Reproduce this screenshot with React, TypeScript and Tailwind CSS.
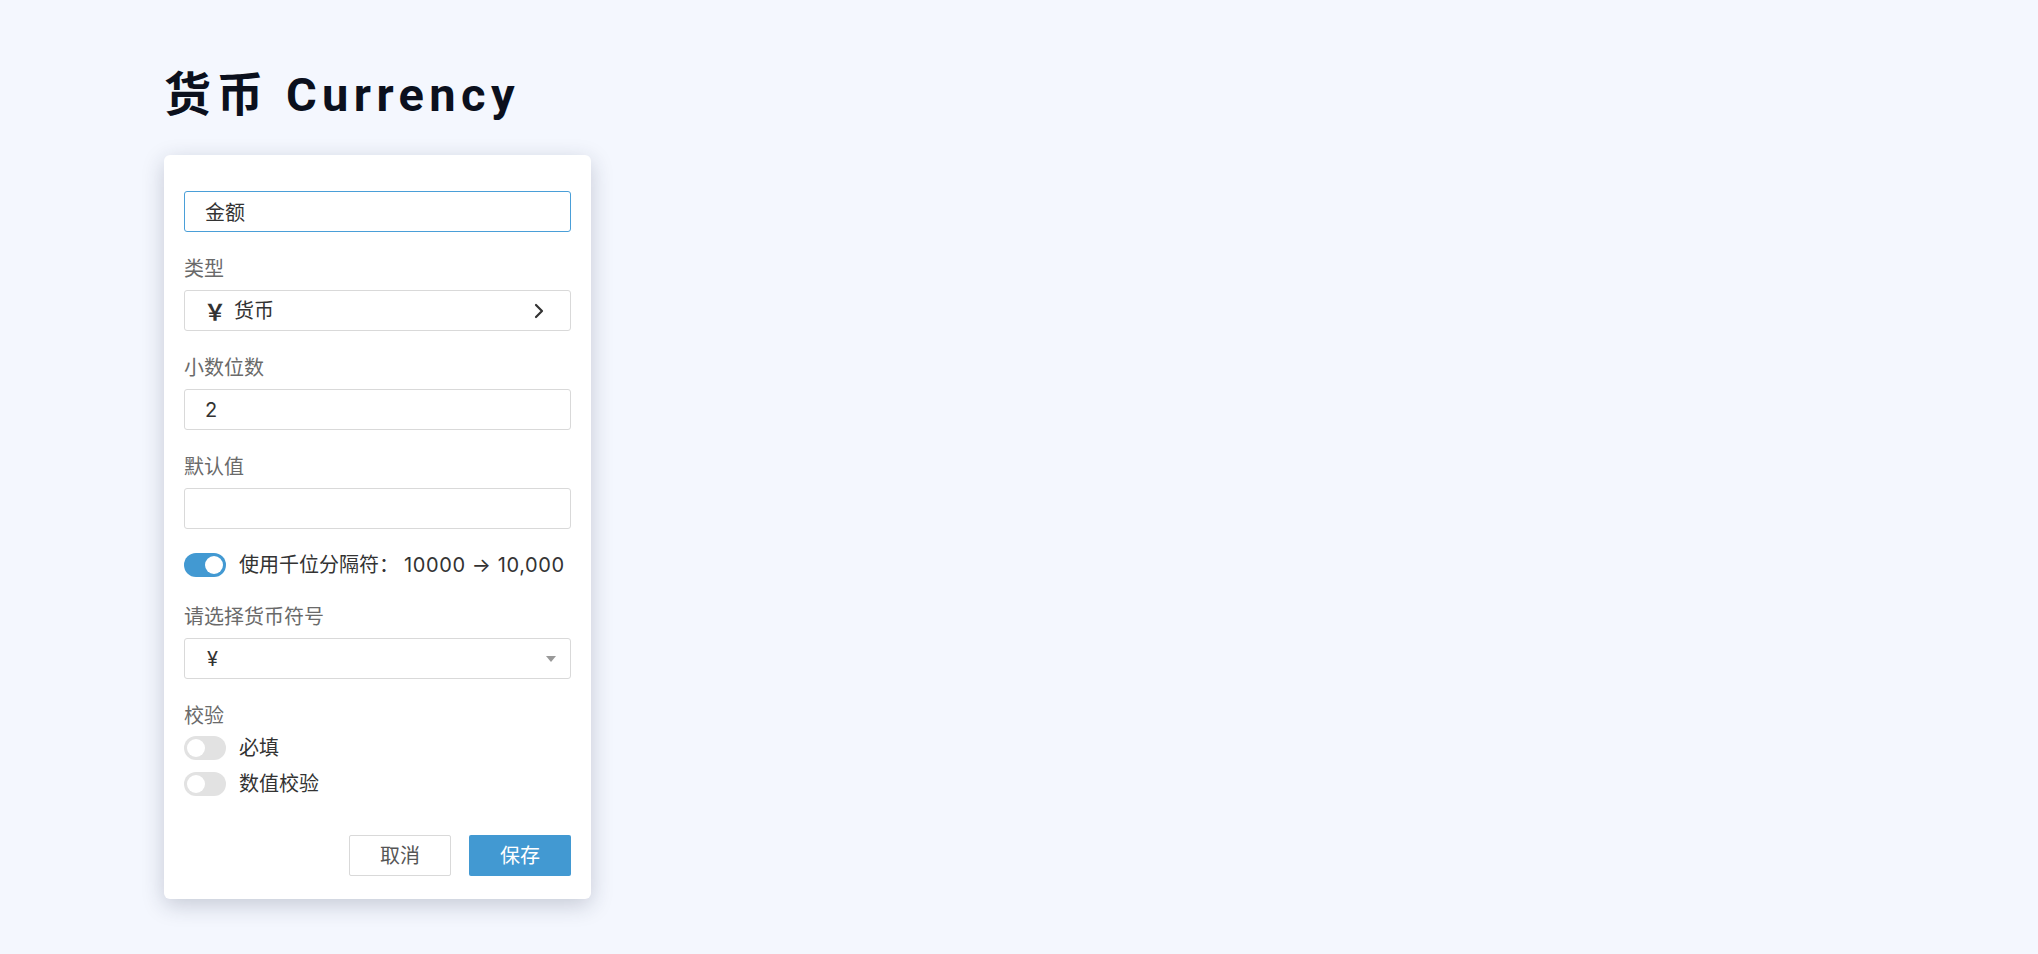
import { useState } from 'react';

const font = { fontFamily: 'Inter, "Noto Sans CJK SC", sans-serif' };

type ToggleProps = {
  on: boolean;
  onChange: () => void;
};

const Toggle = ({ on, onChange }: ToggleProps) => {
  return (
    <button
      onClick={onChange}
      className={
        on
          ? 'flex items-center justify-end w-[42px] h-[24px] rounded-full bg-[#4299d2] px-[3px] shrink-0'
          : 'flex items-center justify-start w-[42px] h-[24px] rounded-full bg-[#e2e2e2] px-[3px] shrink-0'
      }
    >
      <span className="block w-[18px] h-[18px] rounded-full bg-white" />
    </button>
  );
};

const Label = ({ children }: { children: React.ReactNode }) => (
  <div className="h-[28px] leading-[28px] text-[20px] text-[#6a6a6a] mb-[7px]">{children}</div>
);

function App() {
  const [name, setName] = useState('金额');
  const [digits, setDigits] = useState('2');
  const [def, setDef] = useState('');
  const [sep, setSep] = useState(true);
  const [required, setRequired] = useState(false);
  const [numCheck, setNumCheck] = useState(false);

  return (
    <div className="min-h-screen w-full bg-[#f4f7fe] pl-[164px] pt-[67px]" style={font}>
      <h1
        className="h-[56px] leading-[56px] text-[47px] font-bold tracking-[0.115em] text-[#0b101d]"
        style={{ fontFamily: 'Roboto, "Noto Sans CJK SC", sans-serif' }}
      >
        货币 Currency
      </h1>

      <div className="mt-[32px] w-[427px] rounded-md bg-white px-5 pt-[36px] pb-[23px] shadow-[0_6px_22px_rgba(30,40,70,0.22)]">
        <input
          value={name}
          onChange={(e) => setName(e.target.value)}
          className="block w-full h-[41px] rounded-[3px] border border-[#4a9fd8] pl-[20px] text-[20px] text-[#333] outline-none"
        />

        <div className="mt-[23px]">
          <Label>类型</Label>
          <div className="flex items-center w-full h-[41px] rounded-[3px] border border-[#d9d9d9] pl-[19px] pr-[26px] text-[20px] text-[#333]">
            <span className="font-bold text-[22px] mr-[8px]" style={{ fontFamily: '"Noto Sans CJK SC", sans-serif' }}>
              ￥
            </span>
            <span>货币</span>
            <svg className="ml-auto" width="10" height="16" viewBox="0 0 10 16" fill="none">
              <path d="M2 2l6 6-6 6" stroke="#333" strokeWidth="2.2" strokeLinecap="round" strokeLinejoin="round" />
            </svg>
          </div>
        </div>

        <div className="mt-[23px]">
          <Label>小数位数</Label>
          <input
            value={digits}
            onChange={(e) => setDigits(e.target.value)}
            className="block w-full h-[41px] rounded-[3px] border border-[#d9d9d9] pl-[20px] text-[20px] text-[#333] outline-none"
          />
        </div>

        <div className="mt-[23px]">
          <Label>默认值</Label>
          <input
            value={def}
            onChange={(e) => setDef(e.target.value)}
            className="block w-full h-[41px] rounded-[3px] border border-[#d9d9d9] pl-[20px] text-[20px] text-[#333] outline-none"
          />
        </div>

        <div className="mt-[18px] flex items-center h-[36px] gap-[13px] text-[20px] text-[#333]">
          <Toggle on={sep} onChange={() => setSep(!sep)} />
          <span>
            使用千位分隔符：<span className="ml-[5px] tracking-[0.03em]">10000 → 10,000</span>
          </span>
        </div>

        <div className="mt-[20px]">
          <Label>请选择货币符号</Label>
          <div className="flex items-center w-full h-[41px] rounded-[3px] border border-[#d9d9d9] pl-[22px] pr-[14px] text-[20px] text-[#333]">
            <span>¥</span>
            <svg className="ml-auto" width="10" height="6" viewBox="0 0 10 6">
              <path d="M0 0h10L5 6z" fill="#999" />
            </svg>
          </div>
        </div>

        <div className="mt-[23px]">
          <div className="h-[28px] leading-[28px] text-[20px] text-[#6a6a6a]">校验</div>
          <div className="flex items-center h-[36px] gap-[13px] text-[20px] text-[#333]">
            <Toggle on={required} onChange={() => setRequired(!required)} />
            <span>必填</span>
          </div>
          <div className="flex items-center h-[36px] gap-[13px] text-[20px] text-[#333]">
            <Toggle on={numCheck} onChange={() => setNumCheck(!numCheck)} />
            <span>数值校验</span>
          </div>
        </div>

        <div className="mt-[33px] flex justify-end gap-[18px]">
          <button className="w-[102px] h-[41px] rounded-[2px] border border-[#d9d9d9] bg-white text-[20px] text-[#555]">
            取消
          </button>
          <button className="w-[102px] h-[41px] rounded-[2px] bg-[#4299d2] text-[20px] text-white">
            保存
          </button>
        </div>
      </div>
    </div>
  );
}

export default App;
